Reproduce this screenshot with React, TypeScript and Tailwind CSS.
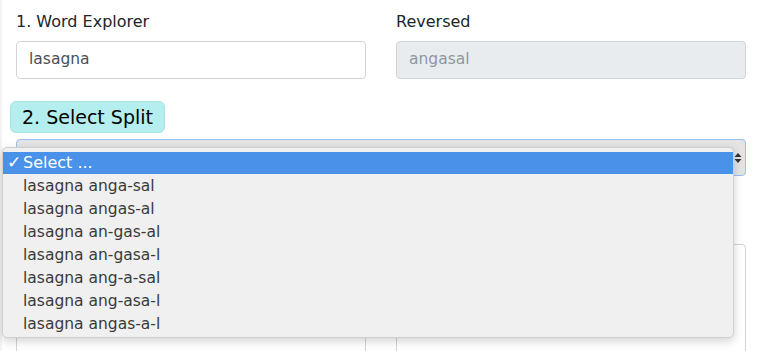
import React from "react";

const items = [
  "lasagna anga-sal",
  "lasagna angas-al",
  "lasagna an-gas-al",
  "lasagna an-gasa-l",
  "lasagna ang-a-sal",
  "lasagna ang-asa-l",
  "lasagna angas-a-l",
];

export default function App() {
  return (
    <div
      className="relative w-[759px] h-[351px] overflow-hidden bg-white text-[#212529]"
      style={{ fontFamily: '"DejaVu Sans", Verdana, sans-serif' }}
    >
      <div className="absolute left-0 top-0 h-full w-[2px] bg-[#f3f3f3]" />
      <div className="flex gap-[30px] pl-4 pt-[11px]">
        <div className="w-[350px]">
          <div className="text-[16px] leading-[22px] mb-[8px]">1. Word Explorer</div>
          <div className="h-[38px] border border-[#ced4da] rounded-[4px] px-3 flex items-center text-[15.5px] text-[#495057]">
            lasagna
          </div>
        </div>
        <div className="w-[350px]">
          <div className="text-[16px] leading-[22px] mb-[8px]">Reversed</div>
          <div className="h-[38px] border border-[#ced4da] rounded-[4px] px-3 flex items-center text-[15.5px] bg-[#e9ecef] text-[#8e979f]">
            angasal
          </div>
        </div>
      </div>
      <div className="pl-[10px] mt-[22px]">
        <div className="inline-flex items-center h-[32px] px-[11px] rounded-[6px] bg-[#b4eeee] text-[19px] text-black border border-[#a6e3e3]">
          2. Select Split
        </div>
      </div>
      <div className="ml-4 mt-[6px] w-[730px] h-[37px] rounded-[4px] border border-[#96c0f2] bg-[#e4e4e4] flex items-center justify-end pr-[3px]">
        <svg width="8" height="12" viewBox="0 0 8 12">
          <path d="M4 1 L7.5 5 L0.5 5 Z" fill="#333" />
          <path d="M4 11 L7.5 7 L0.5 7 Z" fill="#333" />
        </svg>
      </div>
      <div className="flex gap-[30px] pl-4 mt-[68px]">
        <div className="w-[350px] h-[120px] border border-[#ced4da] rounded-[4px]" />
        <div className="w-[350px] h-[120px] border border-[#ced4da] rounded-[4px]" />
      </div>

      <div className="absolute left-[2px] top-[147px] w-[732px] h-[191px] bg-[#f0f0f0] border border-[#cfcfcf] rounded-[5px] shadow-[0_3px_10px_rgba(0,0,0,0.18)] pt-[4px] text-[15.5px]">
        <div className="h-[22px] mb-[1px] bg-[#4a91ea] text-white flex items-center text-[16px]">
          <span className="w-[20px] pl-[4px] text-[17px]">✓</span>
          <span>Select ...</span>
        </div>
        {items.map((t) => (
          <div key={t} className="h-[23px] flex items-center pl-[20px] text-[#3a3a3a]">
            {t}
          </div>
        ))}
      </div>
    </div>
  );
}
